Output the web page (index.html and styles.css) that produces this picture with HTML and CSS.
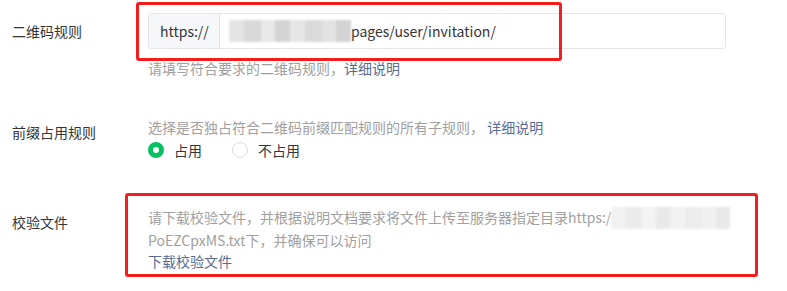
FILE: index.html
```html
<!DOCTYPE html>
<html lang="zh-CN">
<head>
    <meta charset="UTF-8">
    <meta name="viewport" content="width=device-width, initial-scale=1.0">
    <title>二维码规则</title>
    <link rel="stylesheet" href="styles.css">
</head>
<body>
    <div class="form">
        <!-- 二维码规则 -->
        <div class="row row-rule">
            <div class="label">二维码规则</div>
            <div class="field">
                <div class="input">
                    <span class="prefix">https://</span>
                    <span class="value"><span class="mosaic mosaic-input"></span>pages/user/invitation/</span>
                </div>
                <p class="hint">请填写符合要求的二维码规则，<a href="#">详细说明</a></p>
            </div>
            <div class="mark mark-rule"></div>
        </div>

        <!-- 前缀占用规则 -->
        <div class="row row-prefix">
            <div class="label">前缀占用规则</div>
            <div class="field">
                <p class="desc">选择是否独占符合二维码前缀匹配规则的所有子规则， <a href="#">详细说明</a></p>
                <div class="radios">
                    <label class="radio checked"><span class="dot"></span>占用</label>
                    <label class="radio"><span class="dot"></span>不占用</label>
                </div>
            </div>
        </div>

        <!-- 校验文件 -->
        <div class="row row-file">
            <div class="label">校验文件</div>
            <div class="field">
                <p class="desc">请下载校验文件，并根据说明文档要求将文件上传至服务器指定目录https:/<span class="mosaic mosaic-file"></span><br>PoEZCpxMS.txt下，并确保可以访问</p>
                <a class="download" href="#">下载校验文件</a>
            </div>
            <div class="mark mark-file"></div>
        </div>
    </div>
</body>
</html>
```

FILE: styles.css
```css
body {
    margin: 0;
    font-family: "Noto Sans CJK SC", "Microsoft YaHei", sans-serif;
    font-size: 14px;
    color: #353535;
    background-color: #fff;
}

a {
    color: #576b95;
    text-decoration: none;
}

p {
    margin: 0;
}

.form {
    padding: 13px 0 0 12px;
    height: 278px;
}

.row {
    position: relative;
    display: flex;
}

.label {
    width: 136px;
    flex-shrink: 0;
    line-height: 20px;
}

/* Row 1 */
.row-rule .label {
    line-height: 36px;
}

.input {
    display: flex;
    width: 576px;
    height: 34px;
    border: 1px solid #e4e6eb;
    border-radius: 3px;
    line-height: 34px;
}

.prefix {
    width: 59px;
    padding-left: 11px;
    background-color: #f6f7f9;
    border-right: 1px solid #e4e6eb;
}

.value {
    display: flex;
    align-items: center;
    padding-left: 9px;
}

.mosaic {
    display: inline-block;
    background: linear-gradient(90deg,
        #e4e4e4 0 12%, #d9d9d9 12% 26%, #e8e8e8 26% 38%, #d4d4d4 38% 50%,
        #e6e6e6 50% 62%, #dadada 62% 76%, #e2e2e2 76% 88%, #d3d3d3 88% 100%);
    filter: blur(1px);
}

.mosaic-input {
    width: 122px;
    height: 22px;
}

.mosaic-file {
    width: 119px;
    height: 22px;
    vertical-align: -6px;
    opacity: 0.5;
}

.hint {
    margin-top: 9px;
    line-height: 20px;
    color: #a0a0a0;
}

/* Row 2 */
.row-prefix {
    margin-top: 39px;
}

.row-prefix .label {
    padding-top: 5px;
}

.desc {
    line-height: 20px;
    color: #a0a0a0;
}

.radios {
    display: flex;
    gap: 30px;
    margin-top: 1px;
    line-height: 24px;
}

.radio {
    display: flex;
    align-items: center;
    gap: 10px;
    color: #353535;
}

.dot {
    box-sizing: border-box;
    width: 16px;
    height: 16px;
    border: 1px solid #dcdcdc;
    border-radius: 50%;
    background-color: #fff;
}

.radio.checked .dot {
    border: 5px solid #07c160;
}

/* Row 3 */
.row-file {
    margin-top: 44px;
}

.row-file .label {
    padding-top: 5px;
    line-height: 22px;
}

.row-file .desc {
    line-height: 22px;
}

.download {
    display: block;
    line-height: 21px;
}

/* Red annotation frames */
.mark {
    position: absolute;
    box-sizing: border-box;
    border: 3px solid #f31d1d;
    border-radius: 3px;
    pointer-events: none;
}

.mark-rule {
    left: 124px;
    top: -11px;
    width: 426px;
    height: 59px;
}

.mark-file {
    left: 113px;
    top: -13px;
    width: 633px;
    height: 84px;
}
```
